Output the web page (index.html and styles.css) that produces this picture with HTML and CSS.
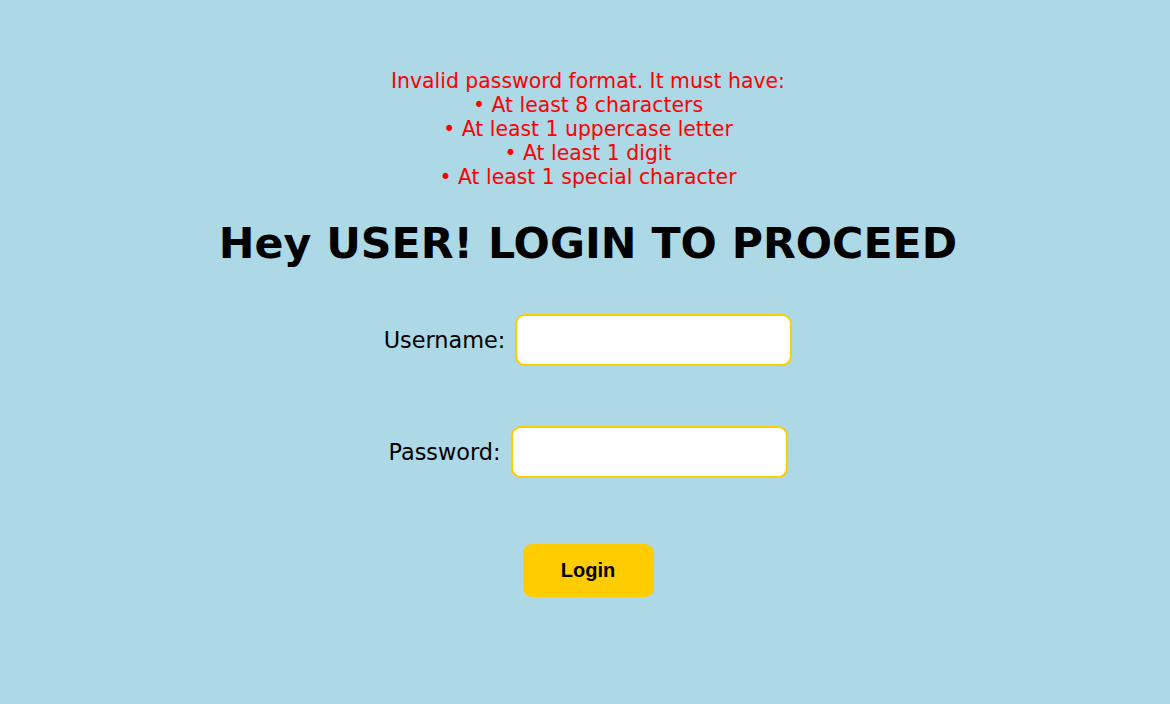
FILE: index.html
```html
<!DOCTYPE html>
<html>
<head>
<meta charset="utf-8">
<title>Login</title>
<link rel="stylesheet" href="styles.css">
</head>
<body>
<main class="page">
  <div class="error">Invalid password format. It must have:<br>• At least 8 characters<br>• At least 1 uppercase letter<br>• At least 1 digit<br>• At least 1 special character</div>
  <h1 class="title">Hey USER! LOGIN TO PROCEED</h1>
  <form class="form">
    <div class="row">
      <label class="label" for="u">Username:</label>
      <input class="input" id="u" type="text">
    </div>
    <div class="row">
      <label class="label" for="p">Password:</label>
      <input class="input" id="p" type="password">
    </div>
    <button class="btn" type="button">Login</button>
  </form>
</main>
</body>
</html>
```
FILE: styles.css
```css
html, body {
  margin: 0;
  background: #add8e6;
}
body {
  font-family: "DejaVu Sans", Verdana, sans-serif;
}
.page {
  padding: 69px 0 0 6px;
  display: flex;
  flex-direction: column;
  align-items: center;
  text-align: center;
}
.error {
  color: #ff0000;
  font-size: 20.4px;
  line-height: 24px;
}
.title {
  margin: 28px 0 0;
  font-size: 42.7px;
  font-weight: bold;
  color: #000;
  line-height: 52px;
}
.form {
  margin-top: 45px;
  display: flex;
  flex-direction: column;
  align-items: center;
  gap: 60px;
}
.row {
  display: flex;
  align-items: center;
  gap: 10px;
}
.label {
  font-size: 22.4px;
  color: #000;
}
.input {
  width: 277px;
  height: 52px;
  box-sizing: border-box;
  border: 2px solid #ffcc00;
  border-radius: 10px;
  background: #fff;
  outline: none;
  margin: 0;
}
.btn {
  margin-top: 6px;
  width: 131px;
  height: 53px;
  border: none;
  border-radius: 9px;
  background: #ffcc00;
  font-family: "Liberation Sans", Arial, sans-serif;
  font-weight: bold;
  font-size: 20px;
  color: #000;
}
```
